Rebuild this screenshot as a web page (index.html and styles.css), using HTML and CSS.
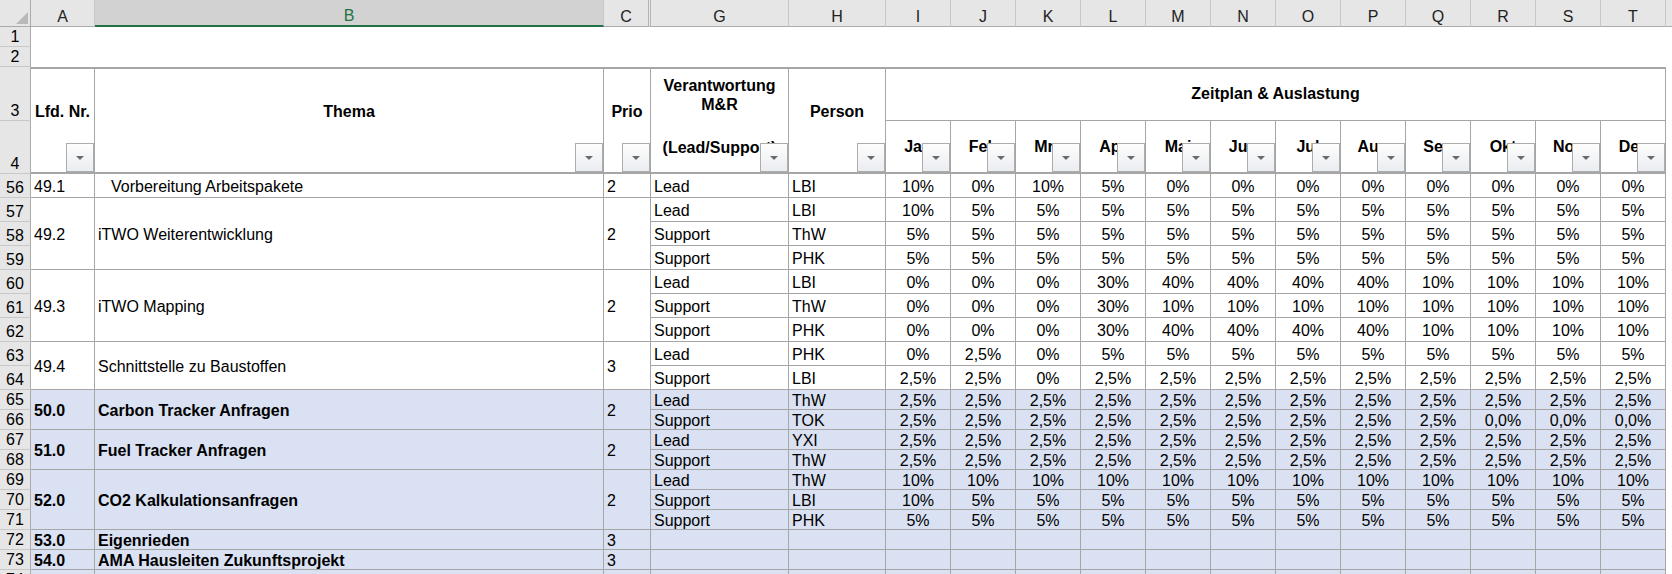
FILE: index.html
```html
<!DOCTYPE html>
<html lang="de">

<head>
  <meta charset="UTF-8">
  <title>Zeitplan &amp; Auslastung</title>
  <link rel="stylesheet" href="styles.css">
</head>

<body>
  <div class="sheet">
    <!-- column letters -->
    <div class="ch corner"><svg width="12" height="12" viewBox="0 0 12 12"><polygon points="12,0 12,12 0,12" fill="#b9b9b9"/></svg></div>
    <div class="ch">A</div>
    <div class="ch sel">B</div>
    <div class="ch hid">C</div>
    <div class="ch">G</div>
    <div class="ch">H</div>
    <div class="ch">I</div>
    <div class="ch">J</div>
    <div class="ch">K</div>
    <div class="ch">L</div>
    <div class="ch">M</div>
    <div class="ch">N</div>
    <div class="ch">O</div>
    <div class="ch">P</div>
    <div class="ch">Q</div>
    <div class="ch">R</div>
    <div class="ch">S</div>
    <div class="ch">T</div>
    <div class="ch end"></div>

    <div class="row"><div class="rh">1</div><div class="blank"></div></div>
    <div class="row"><div class="rh">2</div><div class="blank"></div></div>

    <!-- table header -->
    <div class="row">
      <div class="rh">3</div>
      <div class="hd tall">Lfd. Nr.<span class="flt"></span></div>
      <div class="hd tall">Thema<span class="flt"></span></div>
      <div class="hd tall">Prio<span class="flt"></span></div>
      <div class="hd resp"><div class="ln">Verantwortung</div><div class="ln">M&amp;R</div><div class="ln sub">(Lead/Support)</div><span class="flt"></span></div>
      <div class="hd tall">Person<span class="flt"></span></div>
      <div class="hd plan">Zeitplan &amp; Auslastung</div>
    </div>
    <div class="row">
      <div class="rh">4</div>
      <div class="hd mon">Jan<span class="flt"></span></div>
      <div class="hd mon">Feb<span class="flt"></span></div>
      <div class="hd mon">Mrz<span class="flt"></span></div>
      <div class="hd mon">Apr<span class="flt"></span></div>
      <div class="hd mon">Mai<span class="flt"></span></div>
      <div class="hd mon">Jun<span class="flt"></span></div>
      <div class="hd mon">Jul<span class="flt"></span></div>
      <div class="hd mon">Aug<span class="flt"></span></div>
      <div class="hd mon">Sep<span class="flt"></span></div>
      <div class="hd mon">Okt<span class="flt"></span></div>
      <div class="hd mon">Nov<span class="flt"></span></div>
      <div class="hd mon">Dez<span class="flt"></span></div>
    </div>

    <!-- 49.x -->
    <div class="row">
      <div class="rh">56</div>
      <div class="t">49.1</div>
      <div class="t ind">Vorbereitung Arbeitspakete</div>
      <div class="t">2</div>
      <div class="t">Lead</div>
      <div class="t">LBI</div>
      <div>10%</div><div>0%</div><div>10%</div><div>5%</div><div>0%</div><div>0%</div><div>0%</div><div>0%</div><div>0%</div><div>0%</div><div>0%</div><div>0%</div>
    </div>
    <div class="row">
      <div class="rh">57</div>
      <div class="t r3">49.2</div>
      <div class="t r3">iTWO Weiterentwicklung</div>
      <div class="t r3">2</div>
      <div class="t">Lead</div>
      <div class="t">LBI</div>
      <div>10%</div><div>5%</div><div>5%</div><div>5%</div><div>5%</div><div>5%</div><div>5%</div><div>5%</div><div>5%</div><div>5%</div><div>5%</div><div>5%</div>
    </div>
    <div class="row">
      <div class="rh">58</div>
      <div class="t">Support</div>
      <div class="t">ThW</div>
      <div>5%</div><div>5%</div><div>5%</div><div>5%</div><div>5%</div><div>5%</div><div>5%</div><div>5%</div><div>5%</div><div>5%</div><div>5%</div><div>5%</div>
    </div>
    <div class="row">
      <div class="rh">59</div>
      <div class="t">Support</div>
      <div class="t">PHK</div>
      <div>5%</div><div>5%</div><div>5%</div><div>5%</div><div>5%</div><div>5%</div><div>5%</div><div>5%</div><div>5%</div><div>5%</div><div>5%</div><div>5%</div>
    </div>
    <div class="row">
      <div class="rh">60</div>
      <div class="t r3">49.3</div>
      <div class="t r3">iTWO Mapping</div>
      <div class="t r3">2</div>
      <div class="t">Lead</div>
      <div class="t">LBI</div>
      <div>0%</div><div>0%</div><div>0%</div><div>30%</div><div>40%</div><div>40%</div><div>40%</div><div>40%</div><div>10%</div><div>10%</div><div>10%</div><div>10%</div>
    </div>
    <div class="row">
      <div class="rh">61</div>
      <div class="t">Support</div>
      <div class="t">ThW</div>
      <div>0%</div><div>0%</div><div>0%</div><div>30%</div><div>10%</div><div>10%</div><div>10%</div><div>10%</div><div>10%</div><div>10%</div><div>10%</div><div>10%</div>
    </div>
    <div class="row">
      <div class="rh">62</div>
      <div class="t">Support</div>
      <div class="t">PHK</div>
      <div>0%</div><div>0%</div><div>0%</div><div>30%</div><div>40%</div><div>40%</div><div>40%</div><div>40%</div><div>10%</div><div>10%</div><div>10%</div><div>10%</div>
    </div>
    <div class="row">
      <div class="rh">63</div>
      <div class="t r2">49.4</div>
      <div class="t r2">Schnittstelle zu Baustoffen</div>
      <div class="t r2">3</div>
      <div class="t">Lead</div>
      <div class="t">PHK</div>
      <div>0%</div><div>2,5%</div><div>0%</div><div>5%</div><div>5%</div><div>5%</div><div>5%</div><div>5%</div><div>5%</div><div>5%</div><div>5%</div><div>5%</div>
    </div>
    <div class="row">
      <div class="rh">64</div>
      <div class="t">Support</div>
      <div class="t">LBI</div>
      <div>2,5%</div><div>2,5%</div><div>0%</div><div>2,5%</div><div>2,5%</div><div>2,5%</div><div>2,5%</div><div>2,5%</div><div>2,5%</div><div>2,5%</div><div>2,5%</div><div>2,5%</div>
    </div>

    <!-- 50.0 and up -->
    <div class="row blue">
      <div class="rh">65</div>
      <div class="t b r2">50.0</div>
      <div class="t b r2">Carbon Tracker Anfragen</div>
      <div class="t r2">2</div>
      <div class="t">Lead</div>
      <div class="t">ThW</div>
      <div>2,5%</div><div>2,5%</div><div>2,5%</div><div>2,5%</div><div>2,5%</div><div>2,5%</div><div>2,5%</div><div>2,5%</div><div>2,5%</div><div>2,5%</div><div>2,5%</div><div>2,5%</div>
    </div>
    <div class="row blue">
      <div class="rh">66</div>
      <div class="t">Support</div>
      <div class="t">TOK</div>
      <div>2,5%</div><div>2,5%</div><div>2,5%</div><div>2,5%</div><div>2,5%</div><div>2,5%</div><div>2,5%</div><div>2,5%</div><div>2,5%</div><div>0,0%</div><div>0,0%</div><div>0,0%</div>
    </div>
    <div class="row blue">
      <div class="rh">67</div>
      <div class="t b r2">51.0</div>
      <div class="t b r2">Fuel Tracker Anfragen</div>
      <div class="t r2">2</div>
      <div class="t">Lead</div>
      <div class="t">YXI</div>
      <div>2,5%</div><div>2,5%</div><div>2,5%</div><div>2,5%</div><div>2,5%</div><div>2,5%</div><div>2,5%</div><div>2,5%</div><div>2,5%</div><div>2,5%</div><div>2,5%</div><div>2,5%</div>
    </div>
    <div class="row blue">
      <div class="rh">68</div>
      <div class="t">Support</div>
      <div class="t">ThW</div>
      <div>2,5%</div><div>2,5%</div><div>2,5%</div><div>2,5%</div><div>2,5%</div><div>2,5%</div><div>2,5%</div><div>2,5%</div><div>2,5%</div><div>2,5%</div><div>2,5%</div><div>2,5%</div>
    </div>
    <div class="row blue">
      <div class="rh">69</div>
      <div class="t b r3">52.0</div>
      <div class="t b r3">CO2 Kalkulationsanfragen</div>
      <div class="t r3">2</div>
      <div class="t">Lead</div>
      <div class="t">ThW</div>
      <div>10%</div><div>10%</div><div>10%</div><div>10%</div><div>10%</div><div>10%</div><div>10%</div><div>10%</div><div>10%</div><div>10%</div><div>10%</div><div>10%</div>
    </div>
    <div class="row blue">
      <div class="rh">70</div>
      <div class="t">Support</div>
      <div class="t">LBI</div>
      <div>10%</div><div>5%</div><div>5%</div><div>5%</div><div>5%</div><div>5%</div><div>5%</div><div>5%</div><div>5%</div><div>5%</div><div>5%</div><div>5%</div>
    </div>
    <div class="row blue">
      <div class="rh">71</div>
      <div class="t">Support</div>
      <div class="t">PHK</div>
      <div>5%</div><div>5%</div><div>5%</div><div>5%</div><div>5%</div><div>5%</div><div>5%</div><div>5%</div><div>5%</div><div>5%</div><div>5%</div><div>5%</div>
    </div>
    <div class="row blue">
      <div class="rh">72</div>
      <div class="t b">53.0</div>
      <div class="t b">Eigenrieden</div>
      <div class="t">3</div>
      <div></div><div></div>
      <div></div><div></div><div></div><div></div><div></div><div></div><div></div><div></div><div></div><div></div><div></div><div></div>
    </div>
    <div class="row blue">
      <div class="rh">73</div>
      <div class="t b">54.0</div>
      <div class="t b">AMA Hausleiten Zukunftsprojekt</div>
      <div class="t">3</div>
      <div></div><div></div>
      <div></div><div></div><div></div><div></div><div></div><div></div><div></div><div></div><div></div><div></div><div></div><div></div>
    </div>
    <div class="row blue last">
      <div class="rh">74</div>
      <div class="t b">55.0</div>
      <div class="t b">Zeitfenster</div>
      <div class="t">3</div>
      <div></div><div></div>
      <div></div><div></div><div></div><div></div><div></div><div></div><div></div><div></div><div></div><div></div><div></div><div></div>
    </div>
  </div>
</body>

</html>
```

FILE: styles.css
```css
html,
body {
  margin: 0;
  height: 574px;
  overflow: hidden;
  background: #fff;
}

body {
  font-family: "Liberation Sans", Arial, sans-serif;
  font-size: 16px;
  color: #000;
}

.sheet {
  display: grid;
  grid-template-columns: 31px 64px 509px 47px 138px 97px repeat(12, 65px) 6px;
  grid-template-rows: 27px 20px 20px 54px 53px repeat(9, 24px) repeat(10, 20px);
  line-height: 19px;
}

.row {
  display: contents;
}

/* column letters */
.ch {
  display: flex;
  align-items: flex-end;
  justify-content: center;
  background: #e6e6e6;
  border-right: 1px solid #c8c8c8;
  border-bottom: 1px solid #ababab;
  color: #222;
}

.ch.sel {
  background: #d2d2d2;
  color: #217346;
  border-bottom: 2px solid #217346;
}

.ch.hid {
  border-right: 3px double #b4b4b4;
}

.ch.end {
  border-right: 0;
}

.ch.corner {
  justify-content: flex-end;
  padding: 0 2px 2px 0;
  border-right-color: #ababab;
}

/* cells */
.row > div {
  display: flex;
  align-items: center;
  justify-content: center;
  padding: 2px 3px 0;
  border-right: 1px solid #a6a6a6;
  border-bottom: 1px solid #a6a6a6;
  background: #fff;
  white-space: nowrap;
  overflow: hidden;
}

.blue > div {
  background: #d9e1f2;
}

.row > .rh {
  grid-column: 1;
  align-items: flex-end;
  justify-content: center;
  padding: 0;
  background: #e6e6e6;
  border-right: 1px solid #ababab;
  border-bottom: 1px solid #c8c8c8;
}

.row > .blank {
  grid-column: 2 / -1;
  border: 0;
}

.row > .t {
  justify-content: flex-start;
}

.row > .ind {
  padding-left: 16px;
}

.row > .b {
  font-weight: bold;
}

.r2 {
  grid-row: span 2;
}

.r3 {
  grid-row: span 3;
}

.last > div {
  align-items: flex-start;
}

/* header rows 3-4 */
.row > .hd {
  position: relative;
  display: block;
  padding: 0;
  text-align: center;
  font-weight: bold;
  border-top: 2px solid #a6a6a6;
  border-bottom: 2px solid #a6a6a6;
}

.row > .tall {
  grid-row: span 2;
  padding-top: 33px;
}

.row > .resp {
  grid-row: span 2;
  padding-top: 7px;
}

.resp .sub {
  margin-top: 24px;
}

.row > .plan {
  grid-column: span 12;
  display: flex;
  align-items: center;
  justify-content: center;
  padding-bottom: 3px;
  border-bottom-width: 1px;
}

.row > .mon {
  display: flex;
  align-items: center;
  justify-content: center;
  border-top: 0;
}

.flt {
  position: absolute;
  right: 0;
  bottom: 0;
  width: 28px;
  height: 29px;
  box-sizing: border-box;
  display: flex;
  align-items: center;
  justify-content: center;
  border: 1px solid #acacac;
  background: linear-gradient(#fdfdfd, #eaedf1);
}

.flt::after {
  content: "";
  border-left: 4px solid transparent;
  border-right: 4px solid transparent;
  border-top: 4px solid #6a6a6a;
}
```
